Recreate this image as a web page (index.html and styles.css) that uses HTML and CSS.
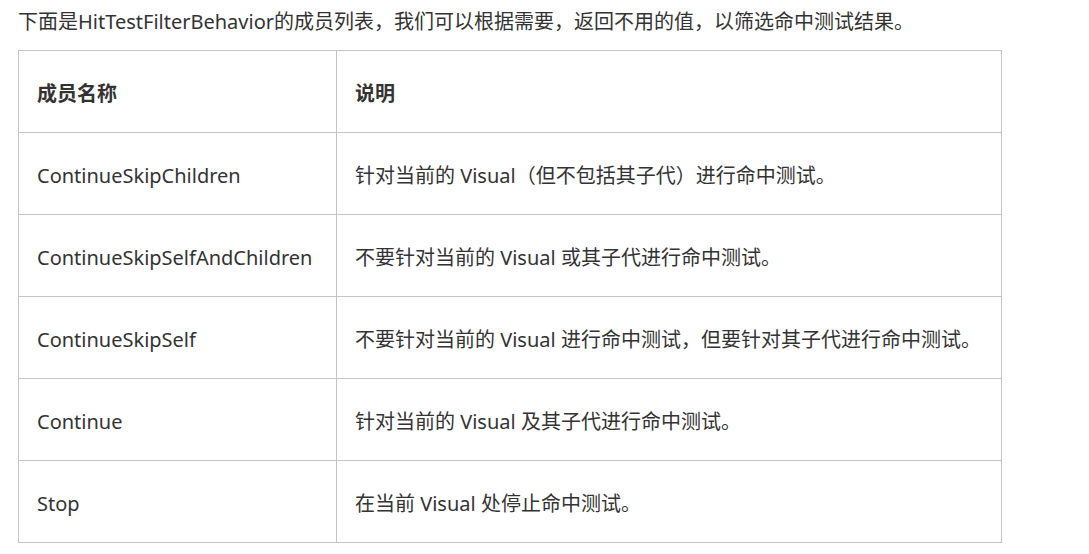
FILE: index.html
```html
<!DOCTYPE html>
<html lang="zh-CN">
<head>
<meta charset="utf-8">
<link rel="stylesheet" href="styles.css">
</head>
<body>
<div class="article">
  <p class="intro">下面是HitTestFilterBehavior的成员列表，我们可以根据需要，返回不用的值，以筛选命中测试结果。</p>
  <table class="members">
    <thead>
      <tr><th class="col-name">成员名称</th><th>说明</th></tr>
    </thead>
    <tbody>
      <tr><td>ContinueSkipChildren</td><td>针对当前的 Visual（但不包括其子代）进行命中测试。</td></tr>
      <tr><td>ContinueSkipSelfAndChildren</td><td>不要针对当前的 Visual 或其子代进行命中测试。</td></tr>
      <tr><td>ContinueSkipSelf</td><td>不要针对当前的 Visual 进行命中测试，但要针对其子代进行命中测试。</td></tr>
      <tr><td>Continue</td><td>针对当前的 Visual 及其子代进行命中测试。</td></tr>
      <tr><td>Stop</td><td>在当前 Visual 处停止命中测试。</td></tr>
    </tbody>
  </table>
</div>
</body>
</html>
```
FILE: styles.css
```css
html, body {
  margin: 0;
  padding: 0;
  background: #ffffff;
}
body {
  font-family: "Noto Sans", "Noto Sans CJK SC", sans-serif;
  color: #333333;
  font-size: 20px;
}
.article {
  padding: 8px 18px;
}
.intro {
  margin: 0 0 15px 0;
  line-height: 27px;
}
.members {
  border-collapse: collapse;
  width: 984px;
}
.members th,
.members td {
  border: 1px solid #c4c4c4;
  height: 82px;
  padding: 4px 18px 0 18px;
  text-align: left;
  vertical-align: middle;
  box-sizing: border-box;
  line-height: 28px;
}
.members th {
  font-weight: bold;
}
.col-name {
  width: 318px;
}
```
